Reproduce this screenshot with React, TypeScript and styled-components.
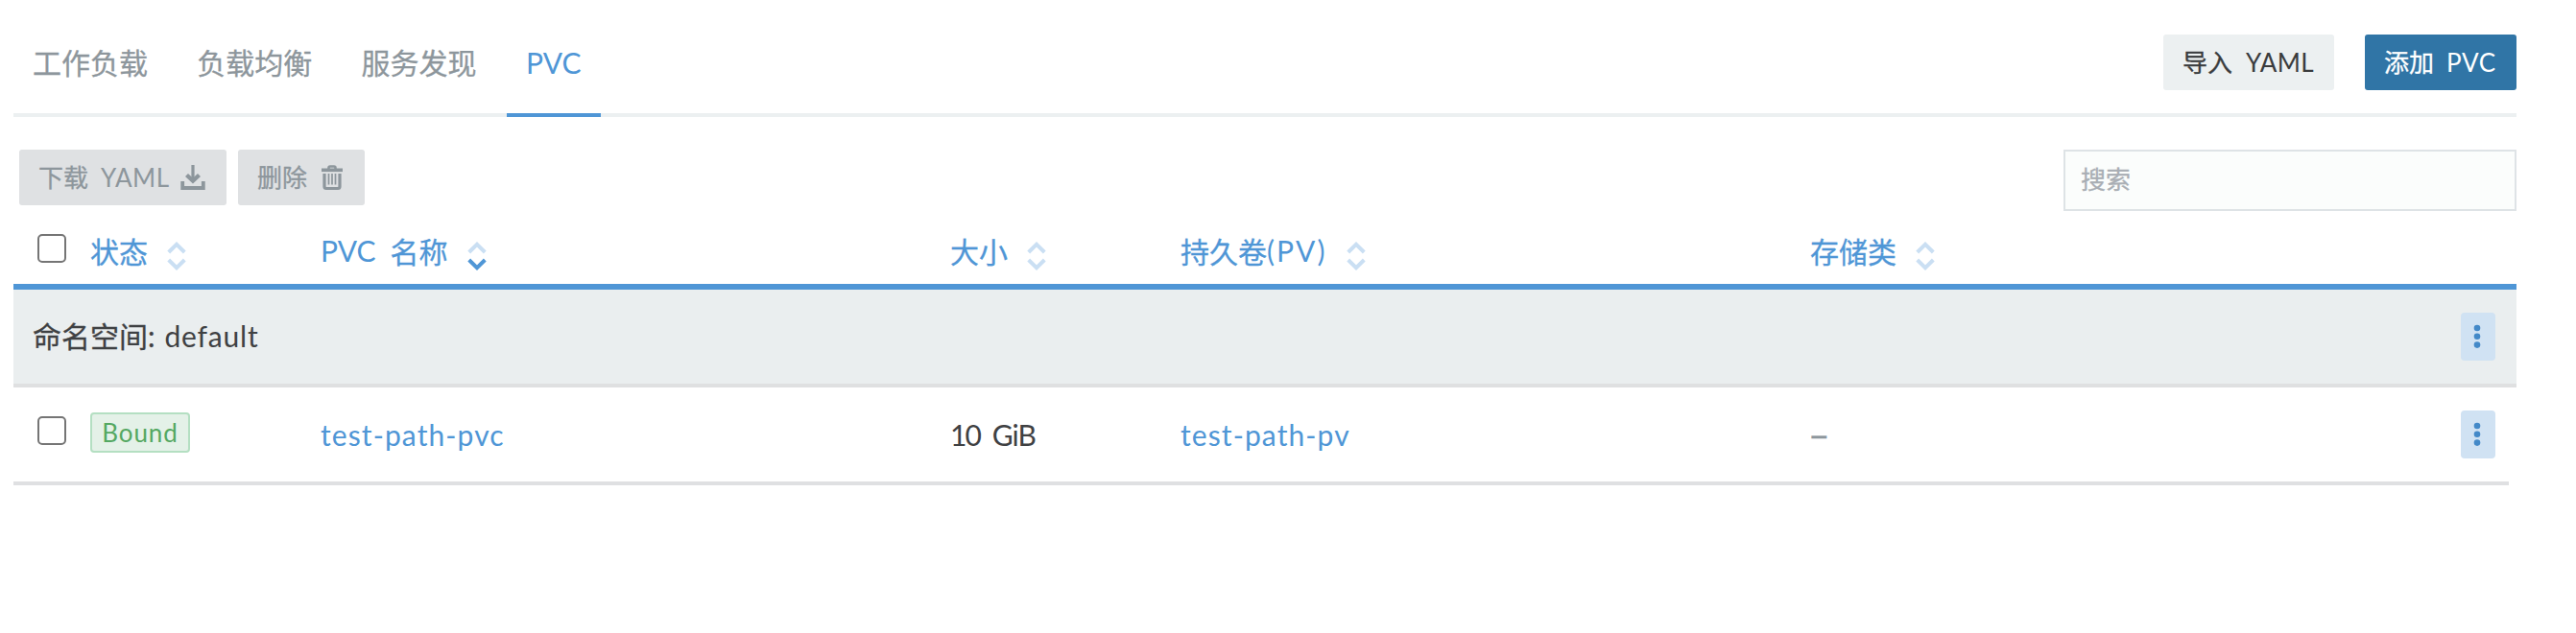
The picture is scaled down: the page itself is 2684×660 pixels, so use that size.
import React from 'react';
import styled, { createGlobalStyle, css } from 'styled-components';

const Global = createGlobalStyle`
  * { box-sizing: border-box; }
  body {
    margin: 0;
    background: #fff;
    color: #3f4143;
    font-family: Lato, "Noto Sans CJK SC", sans-serif;
    font-size: 30px;
    -webkit-text-stroke: 0.3px currentColor;
  }
  button, input { font-family: inherit; }
`;

const Page = styled.main`
  width: 2608px;
  margin-left: 14px;
`;

const TabBar = styled.header`
  display: flex;
  justify-content: space-between;
  height: 122px;
  border-bottom: 4px solid #ecf0f1;
`;

const Tabs = styled.nav`
  display: flex;
  gap: 11.3px;
  height: 122px;
`;

const Tab = styled.a<{ $active?: boolean }>`
  display: block;
  padding: 0 20px;
  line-height: 130px;
  color: ${p => (p.$active ? '#4f96d6' : '#8d969c')};
  border-bottom: 4px solid ${p => (p.$active ? '#4f96d6' : 'transparent')};
  ${p => p.$active && css`width: 98px;`}
`;

const Latin = styled.span<{ $track?: number; $gap?: number }>`
  letter-spacing: ${p => p.$track ?? 0}px;
  margin-left: ${p => p.$gap ?? 0}px;
  -webkit-text-stroke: 0;
`;

const Han = styled.span`
  margin-left: 15px;
`;

const HeaderActions = styled.div`
  display: flex;
  gap: 32px;
  padding-top: 36px;
`;

type Kind = 'plain' | 'primary' | 'muted';
const fills: Record<Kind, [string, string]> = {
  plain: ['#ecf0f1', '#3a3c3e'],
  primary: ['#3075a6', '#ffffff'],
  muted: ['#dfe1e3', '#8d969c'],
};

const Button = styled.button<{ $kind: Kind; $width: number }>`
  display: flex;
  align-items: center;
  width: ${p => p.$width}px;
  height: 58px;
  padding: 0 0 0 20px;
  border: 0;
  border-radius: 3px;
  background: ${p => fills[p.$kind][0]};
  color: ${p => fills[p.$kind][1]};
  font-size: 26px;
  line-height: 58px;
  white-space: nowrap;
`;

const ButtonIcon = styled.svg<{ $gap: number }>`
  margin-left: ${p => p.$gap}px;
  flex: none;
`;

const Toolbar = styled.div`
  display: flex;
  gap: 12px;
  height: 98px;
  padding: 34px 0 0 6px;
`;

const Search = styled.input`
  width: 472px;
  height: 64px;
  margin-left: auto;
  padding: 0 16px 2px;
  border: 2px solid #dee3e6;
  border-radius: 0;
  background: #fbfdfc;
  font-size: 26px;
  color: #3f4143;
  &::placeholder { color: #a9aeb4; opacity: 1; }
`;

const columns = css`
  display: grid;
  grid-template-columns: 80px 240px 656px 240px 656px 1fr 58px;
  align-items: center;
`;

const HeadRow = styled.div`
  ${columns}
  height: 82px;
  border-bottom: 6px solid #4f96d6;
  color: #4f96d6;
`;

const HeadCell = styled.div`
  display: flex;
  align-items: center;
  height: 76px;
  padding-top: 6px;
  white-space: nowrap;
`;

const GroupRow = styled.div`
  display: flex;
  align-items: center;
  justify-content: space-between;
  height: 102px;
  padding: 0 22px 0 20px;
  background: #eaeeef;
  border-bottom: 4px solid #dfe0e1;
`;

const GroupName = styled.div`
  padding-bottom: 5px;
`;

const Row = styled.div`
  ${columns}
  grid-template-columns: 80px 240px 656px 240px 656px 1fr 50px;
  width: 2600px;
  height: 102px;
  border-bottom: 4px solid #dfe0e2;
`;

const Cell = styled.div<{ $link?: boolean; $track?: number }>`
  color: ${p => (p.$link ? '#4f96d6' : 'inherit')};
  letter-spacing: ${p => p.$track ?? 0}px;
  white-space: nowrap;
  -webkit-text-stroke: 0;
`;

const Blank = styled.div`
  color: #8d969c;
  font-size: 39px;
  line-height: 40px;
  padding-bottom: 3px;
  margin-left: -2px;
`;

const Check = styled.input.attrs({ type: 'checkbox' })<{ $lift: number }>`
  appearance: none;
  width: 30px;
  height: 30px;
  margin: 0 0 ${p => p.$lift}px 25px;
  border: 2px solid #757575;
  border-radius: 5px;
  background: #fff;
`;

const Badge = styled.span`
  display: block;
  width: 104px;
  height: 42px;
  margin-bottom: 4px;
  border: 2px solid #b4dfc2;
  border-radius: 4px;
  background: #e4f1e8;
  color: #54a862;
  font-size: 26px;
  letter-spacing: 0.9px;
  line-height: 38px;
  text-align: center;
`;

const MenuButton = styled.button`
  display: flex;
  align-items: center;
  justify-content: center;
  width: 36px;
  height: 50px;
  padding: 0 2px 0 0;
  border: 0;
  border-radius: 4px;
  background: #d0e2f3;
`;

const SortIcon = styled.svg`
  margin: 12px 0 0 20px;
  flex: none;
`;

function Sort({ down = false }: { down?: boolean }) {
  return (
    <SortIcon width="20" height="30" viewBox="0 0 20 30" fill="none" strokeWidth="4">
      <path d="M1.7 11 10 2.8 18.3 11" stroke="#cadff3" />
      <path d="M1.7 19 10 27.2 18.3 19" stroke={down ? '#4f96d6' : '#cadff3'} />
    </SortIcon>
  );
}

function Menu() {
  return (
    <MenuButton aria-label="menu">
      <svg width="8" height="26" viewBox="0 0 8 26" fill="#4389c8">
        <circle cx="4" cy="4" r="3.3" />
        <circle cx="4" cy="12.8" r="3.3" />
        <circle cx="4" cy="21.6" r="3.3" />
      </svg>
    </MenuButton>
  );
}

export default function App() {
  return (
    <>
      <Global />
      <Page>
        <TabBar>
          <Tabs>
            <Tab>工作负载</Tab>
            <Tab>负载均衡</Tab>
            <Tab>服务发现</Tab>
            <Tab $active><Latin>PVC</Latin></Tab>
          </Tabs>
          <HeaderActions>
            <Button $kind="plain" $width={178}>导入<Latin $gap={14} $track={0.4}>YAML</Latin></Button>
            <Button $kind="primary" $width={158}>添加<Latin $gap={13} $track={0.6}>PVC</Latin></Button>
          </HeaderActions>
        </TabBar>
        <Toolbar>
          <Button $kind="muted" $width={216}>
            下载<Latin $gap={13} $track={0.5}>YAML</Latin>
            <ButtonIcon $gap={11} width="26" height="28" viewBox="0 0 26 28" fill="none" stroke="currentColor">
              <path d="M2.2 18v7h21.6v-7" strokeWidth="3.8" />
              <path d="M13 1v16" strokeWidth="3.2" />
              <path d="M6.5 11.5 13 17.5l6.5-6" strokeWidth="4.4" />
            </ButtonIcon>
          </Button>
          <Button $kind="muted" $width={132}>
            删除
            <ButtonIcon $gap={15} width="22" height="28" viewBox="0 0 22 28" fill="none" stroke="currentColor">
              <path d="M0 6.3h22" strokeWidth="3.6" />
              <path d="M7.5 5V4q0-1.500 1.500-1.500h4q1.500 0 1.500 1.500v1" strokeWidth="2.6" />
              <path d="M3 10v13.500q0 2 2 2h12q2 0 2-2V10" strokeWidth="3.2" />
              <path d="M7.5 10v11.500M11 10v11.500M14.500 10v11.500" strokeWidth="1.7" />
            </ButtonIcon>
          </Button>
          <Search placeholder="搜索" />
        </Toolbar>
        <HeadRow>
          <Check $lift={-2} />
          <HeadCell>状态<Sort /></HeadCell>
          <HeadCell><Latin>PVC</Latin><Han>名称</Han><Sort down /></HeadCell>
          <HeadCell>大小<Sort /></HeadCell>
          <HeadCell>持久卷<Latin $track={2.1}>(PV)</Latin><Sort /></HeadCell>
          <HeadCell>存储类<Sort /></HeadCell>
        </HeadRow>
        <GroupRow>
          <GroupName>命名空间:<Latin $gap={10} $track={0.8}>default</Latin></GroupName>
          <Menu />
        </GroupRow>
        <Row>
          <Check $lift={8} />
          <Cell><Badge>Bound</Badge></Cell>
          <Cell $link $track={1.1}>test-path-pvc</Cell>
          <Cell><Latin $track={-2}>10</Latin><Latin $gap={13} $track={-1}>GiB</Latin></Cell>
          <Cell $link $track={1.1}>test-path-pv</Cell>
          <Blank>–</Blank>
          <Menu />
        </Row>
      </Page>
    </>
  );
}
